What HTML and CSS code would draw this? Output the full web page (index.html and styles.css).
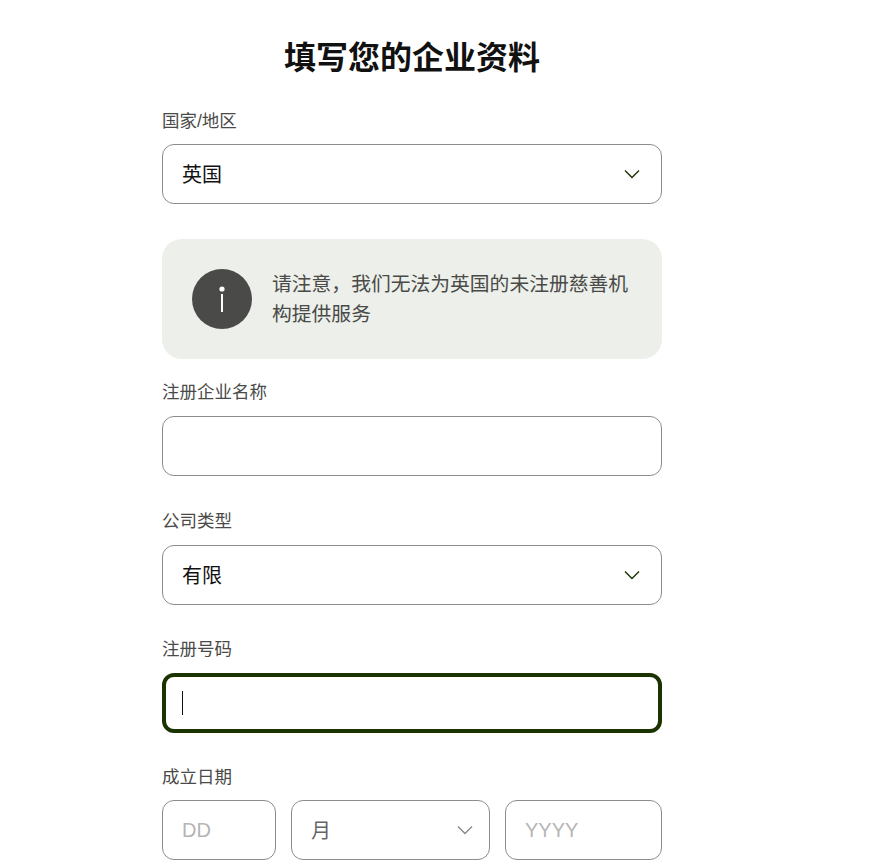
FILE: index.html
```html
<!DOCTYPE html>
<html lang="zh-CN">
<head>
<meta charset="utf-8">
<title>填写您的企业资料</title>
<link rel="stylesheet" href="styles.css">
</head>
<body>
<form class="form">
  <h1 class="title">填写您的企业资料</h1>
  <div class="field">
    <label class="label label-low">国家/地区</label>
    <div class="box select"><span>英国</span>
      <svg class="chev" width="16" height="10" viewBox="0 0 16 10"><path d="M1 1.5l7 7 7-7" fill="none" stroke="#1a3300" stroke-width="1.4"/></svg>
    </div>
  </div>
  <div class="notice">
    <svg class="info" width="60" height="60" viewBox="0 0 60 60"><circle cx="30" cy="30" r="30" fill="#4a4b48"/><circle cx="30" cy="20" r="2.6" fill="#fff"/><rect x="29" y="25" width="2" height="18" fill="#fff"/></svg>
    <p class="notice-text">请注意，我们无法为英国的未注册慈善机构提供服务</p>
  </div>
  <div class="field after-notice">
    <label class="label">注册企业名称</label>
    <input class="box input" type="text">
  </div>
  <div class="field">
    <label class="label">公司类型</label>
    <div class="box select"><span>有限</span>
      <svg class="chev" width="16" height="10" viewBox="0 0 16 10"><path d="M1 1.5l7 7 7-7" fill="none" stroke="#1a3300" stroke-width="1.4"/></svg>
    </div>
  </div>
  <div class="field field-number">
    <label class="label">注册号码</label>
    <div class="box focused"><span class="caret"></span></div>
  </div>
  <div class="field field-date">
    <label class="label label-tight">成立日期</label>
    <div class="date-row">
      <input class="box input date-day" type="text" placeholder="DD">
      <div class="box select date-month"><span>月</span>
        <svg class="chev chev-month" width="16" height="10" viewBox="0 0 16 10"><path d="M1 1.5l7 7 7-7" fill="none" stroke="#8a8a8a" stroke-width="1.4"/></svg>
      </div>
      <input class="box input date-year" type="text" placeholder="YYYY">
    </div>
  </div>
</form>
</body>
</html>
```
FILE: styles.css
```css
* { box-sizing: border-box; }
html, body { margin: 0; padding: 0; background: #fff; }
body {
  height: 863px;
  overflow: hidden;
  font-family: "Liberation Sans", "Noto Sans CJK SC", sans-serif;
}
.form { width: 500px; margin-left: 162px; padding-top: 35px; }
.title {
  margin: 0 0 27px;
  height: 46px;
  line-height: 46px;
  font-size: 32px;
  font-weight: 700;
  text-align: center;
  color: #111;
}
.field { margin-top: 33px; }
.title + .field { margin-top: 0; }
.after-notice { margin-top: 21px; }
.field-number { margin-top: 32px; }
.field-date { margin-top: 32px; }
.label {
  display: block;
  height: 24px;
  line-height: 24px;
  margin-bottom: 12px;
  font-size: 17.5px;
  color: #4a4a48;
}
.label-low { line-height: 26px; }
.label-tight { margin-bottom: 11px; }
.box {
  display: block;
  width: 100%;
  height: 60px;
  border: 1px solid #8c8c8c;
  border-radius: 12px;
  background: #fff;
  font-family: inherit;
  font-size: 20px;
  color: #111;
  padding: 0 19px;
  outline: none;
}
.select { display: flex; align-items: center; justify-content: space-between; }
.select span { margin-bottom: 2px; }
.chev { margin-right: 2px; }
.chev-month { margin-right: -3px; }
.notice {
  display: flex;
  align-items: center;
  gap: 20px;
  height: 120px;
  margin-top: 35px;
  padding: 0 30px;
  background: #ecefea;
  border-radius: 20px;
}
.info { flex: none; }
.notice-text {
  margin: 0;
  font-size: 19.8px;
  line-height: 30px;
  color: #4a4a48;
}
.focused {
  display: flex;
  align-items: center;
  border: 4px solid #1a3300;
  padding: 0 16px;
}
.caret { width: 1px; height: 24px; background: #111; }
.date-row { display: flex; gap: 15px; }
.date-day { width: 114px; flex: none; }
.date-month { width: 199px; flex: none; color: #666; }
.date-year { width: 157px; flex: none; }
.input::placeholder { color: #b5b5b5; opacity: 1; }
```
